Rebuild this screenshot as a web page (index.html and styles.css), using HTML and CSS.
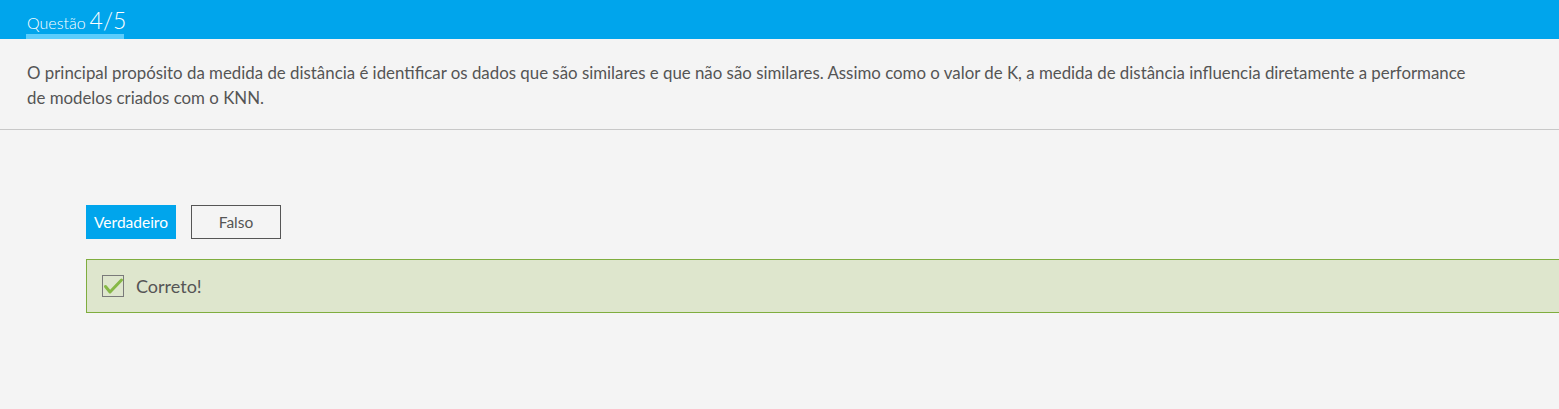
FILE: index.html
```html
<!DOCTYPE html>
<html lang="pt">
<head>
<meta charset="utf-8">
<title>Questão 4/5</title>
<link rel="stylesheet" href="styles.css">
</head>
<body>
<header class="topbar">
  <div class="qtab"><span class="qlabel">Questão</span><span class="qnum">4/5</span></div>
</header>
<section class="statement">
  <p>O principal propósito da medida de distância é identificar os dados que são similares e que não são similares. Assimo como o valor de K, a medida de distância influencia diretamente a performance de modelos criados com o KNN.</p>
</section>
<section class="answer">
  <div class="choices">
    <button class="btn btn-selected">Verdadeiro</button>
    <button class="btn btn-outline">Falso</button>
  </div>
  <div class="feedback">
    <span class="check">
      <svg width="22" height="22" viewBox="0 0 22 22">
        <rect x="0.5" y="0.5" width="21" height="21" fill="none" stroke="#7a7a7a" stroke-width="1"/>
        <path d="M3.5 11.5 L8 17 L19.5 5" fill="none" stroke="#86b846" stroke-width="3" stroke-linejoin="round" stroke-linecap="round"/>
      </svg>
    </span>
    <span class="fb-text">Correto!</span>
  </div>
</section>
</body>
</html>
```

FILE: styles.css
```css
html, body {
  margin: 0;
  padding: 0;
  background: #f4f4f4;
  font-family: Lato, "Open Sans", sans-serif;
  color: #555555;
}

.topbar {
  height: 39px;
  background: #00a5ec;
  display: flex;
  align-items: flex-end;
  padding-left: 26px;
  box-sizing: border-box;
}

.qtab {
  width: 98px;
  height: 39px;
  box-sizing: border-box;
  border-bottom: 5px solid #5ccdfc;
  color: #ffffff;
  font-weight: 300;
  display: flex;
  align-items: flex-end;
  white-space: nowrap;
}

.qlabel {
  font-size: 16px;
  line-height: 1;
  padding-left: 1px;
  margin-bottom: 3px;
}

.qnum {
  font-size: 23px;
  line-height: 1;
  margin-left: 4px;
  margin-bottom: 2px;
}

.statement {
  box-sizing: border-box;
  height: 91px;
  border-bottom: 1px solid #c8c8c8;
  padding: 21px 0 0 27px;
}

.statement p {
  margin: 0;
  width: 1455px;
  font-size: 16.85px;
  line-height: 25px;
}

.answer {
  padding: 75px 0 0 86px;
}

.choices {
  display: flex;
  gap: 15px;
}

.btn {
  width: 90px;
  height: 34px;
  box-sizing: border-box;
  font-family: Lato, "Open Sans", sans-serif;
  font-size: 15.5px;
  padding: 0;
  cursor: pointer;
}

.btn-selected {
  background: #00a5ec;
  color: #ffffff;
  border: none;
}

.btn-outline {
  background: transparent;
  color: #555555;
  border: 1px solid #555555;
}

.feedback {
  margin-top: 20px;
  height: 54px;
  box-sizing: border-box;
  background: #dee6cd;
  border: 1px solid #7fad3e;
  border-right: none;
  display: flex;
  align-items: center;
  padding-left: 15px;
}

.check {
  display: flex;
  width: 22px;
  height: 22px;
}

.fb-text {
  margin-left: 12px;
  font-size: 18px;
  color: #555555;
}
```
